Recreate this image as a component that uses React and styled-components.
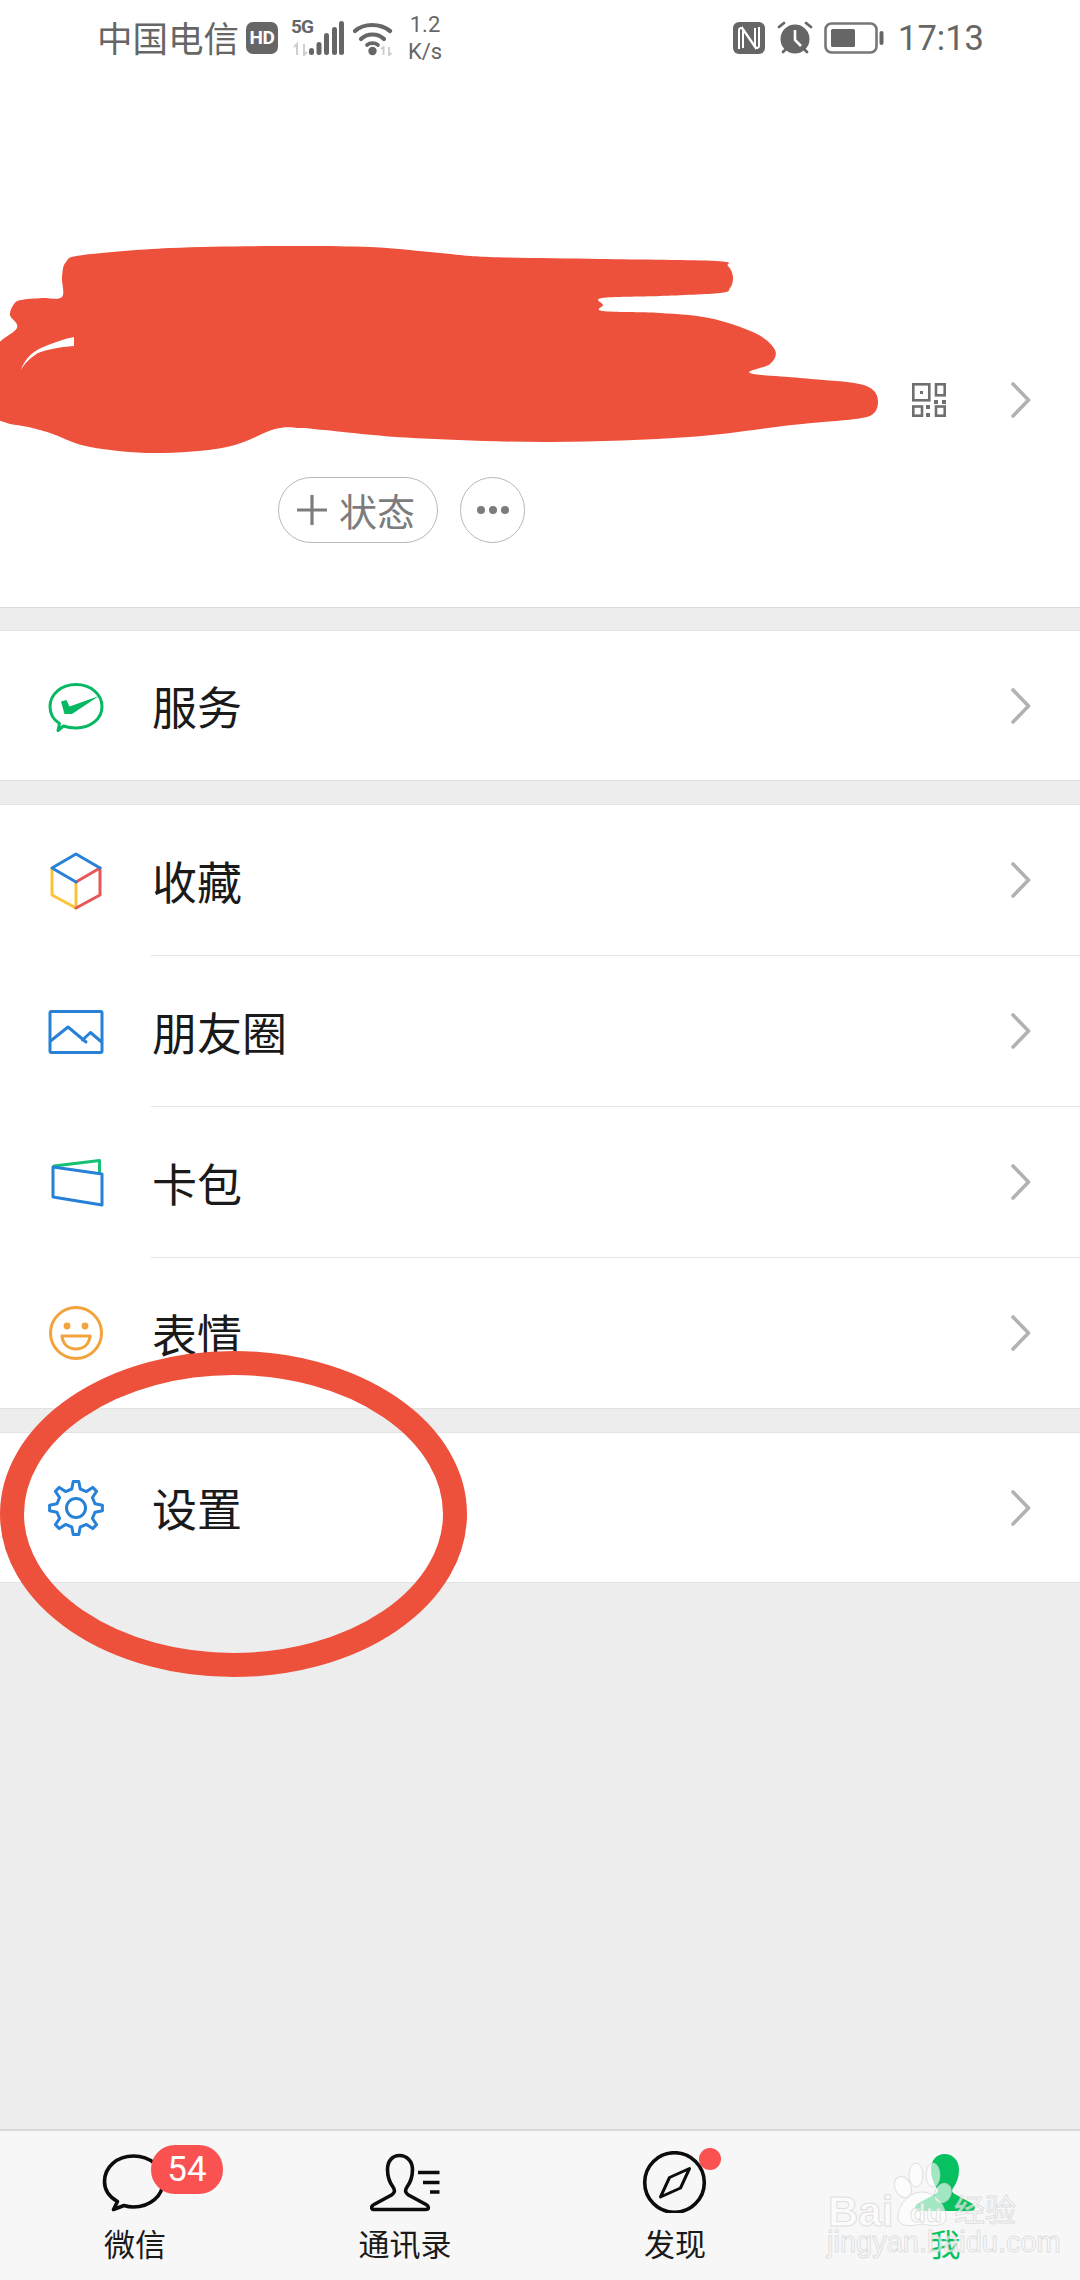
import React from "react";
import styled, { createGlobalStyle } from "styled-components";

const CJK = `"Noto Sans CJK SC", "Roboto", sans-serif`;
const LATIN = `"Roboto", "Noto Sans CJK SC", sans-serif`;

const Global = createGlobalStyle`
  html, body { margin: 0; padding: 0; background: #ededed; }
  * { box-sizing: border-box; }
  svg { display: block; flex: none; }
`;

const Page = styled.div`
  position: relative;
  width: 1080px;
  height: 2280px;
  overflow: hidden;
  display: flex;
  flex-direction: column;
  background: #ededed;
  font-family: ${CJK};
`;

/* ---------- status bar ---------- */
const StatusBar = styled.div`
  flex: none;
  height: 76px;
  padding: 0 96px 0 97px;
  display: flex;
  align-items: center;
  justify-content: space-between;
  color: #666;
`;
const StatusGroup = styled.div`
  display: flex;
  align-items: center;
`;
const Carrier = styled.span`
  width: 149px;
  margin-top: -3px;
  font-size: 35.5px;
  line-height: 40px;
  white-space: nowrap;
`;
const HdBadge = styled.div`
  width: 32px;
  height: 32px;
  border-radius: 7px;
  background: #666;
  color: #fff;
  font-family: ${LATIN};
  font-weight: 700;
  font-size: 19px;
  line-height: 32px;
  letter-spacing: -0.5px;
  text-align: center;
`;
const SignalCluster = styled.div`
  position: relative;
  width: 53px;
  height: 36px;
  margin-left: 13px;
`;
const FiveG = styled.span`
  position: absolute;
  left: 0;
  top: -3px;
  font-family: ${LATIN};
  font-weight: 700;
  font-size: 19px;
  line-height: 20px;
  letter-spacing: -1px;
  color: #666;
`;
const WifiIcon = styled.svg`
  margin-left: 9px;
`;
const Speed = styled.div`
  width: 36px;
  margin-left: 13px;
  margin-top: -1px;
  font-family: ${LATIN};
  font-size: 22px;
  line-height: 27px;
  text-align: center;
  white-space: nowrap;
`;
const AlarmIcon = styled.svg`
  margin-left: 12px;
`;
const BatteryIcon = styled.svg`
  margin-left: 11px;
`;
const Clock = styled.span`
  margin-left: 14px;
  font-family: ${LATIN};
  font-size: 34.5px;
  line-height: 40px;
`;

/* ---------- profile header ---------- */
const Header = styled.div`
  flex: none;
  background: #fff;
  height: 608px;
  border-bottom: 1px solid #dcdcdc;
  display: flex;
  flex-direction: column;
`;
const ProfileRow = styled.div`
  flex: none;
  height: 48px;
  margin-top: 300px;
  padding-right: 49px;
  display: flex;
  align-items: center;
  justify-content: flex-end;
  gap: 65px;
`;
const StatusActions = styled.div`
  flex: none;
  margin-top: 53px;
  margin-left: 278px;
  display: flex;
  gap: 22px;
`;
const Pill = styled.div`
  height: 66px;
  width: ${(p) => p.$w}px;
  border: 1px solid #b8b8b8;
  border-radius: 33px;
  display: flex;
  align-items: center;
  justify-content: ${(p) => (p.$start ? "flex-start" : "center")};
  padding-left: ${(p) => (p.$start ? 17 : 0)}px;
  gap: 11px;
  color: #7c7c7c;
  font-size: 38px;
  line-height: 40px;
`;

/* ---------- list ---------- */
const Section = styled.div`
  flex: none;
  margin-top: ${(p) => p.$mt}px;
  background: #fff;
  border-top: 1px solid #e2e2e2;
  border-bottom: 1px solid #e2e2e2;
`;
const Row = styled.div`
  position: relative;
  height: ${(p) => p.$h || 150}px;
  padding: 0 49px 0 46px;
  display: flex;
  align-items: center;
`;
const Divider = styled.div`
  height: 1px;
  margin-left: 151px;
  background: #e3e3e3;
`;
const RowLabel = styled.span`
  flex: 1;
  margin-left: 46px;
  padding-top: 1px;
  font-size: 45px;
  line-height: 60px;
  color: #1a1a1a;
`;
const Spacer = styled.div`
  flex: 1;
`;

/* ---------- tab bar ---------- */
const TabBar = styled.div`
  flex: none;
  height: 151px;
  background: #f7f7f7;
  border-top: 2px solid #d8d8d8;
  display: grid;
  grid-template-columns: repeat(4, 270px);
`;
const Tab = styled.div`
  position: relative;
  display: flex;
  flex-direction: column;
  align-items: center;
  padding-top: 20px;
`;
const TabLabel = styled.span`
  margin-top: 9px;
  font-size: 31px;
  line-height: 42px;
  color: ${(p) => (p.$active ? "#07c160" : "#1a1a1a")};
`;
const Badge = styled.div`
  position: absolute;
  left: 151px;
  top: 14px;
  width: 72px;
  height: 49px;
  border-radius: 24px;
  background: #fa5151;
  color: #fff;
  font-family: ${LATIN};
  font-size: 35px;
  line-height: 49px;
  text-align: center;
`;
const Dot = styled.div`
  position: absolute;
  left: 159px;
  top: 17px;
  width: 22px;
  height: 22px;
  border-radius: 50%;
  background: #fa5151;
`;

/* ---------- overlays ---------- */
const Annotations = styled.svg`
  position: absolute;
  left: 0;
  top: 0;
  pointer-events: none;
`;
const Watermark = styled.div`
  position: absolute;
  left: 826px;
  top: 2160px;
  width: 200px;
  height: 100px;
  pointer-events: none;
`;
const PawMark = styled.svg`
  position: absolute;
  left: 0;
  top: 0;
`;
const WmText = styled.span`
  position: absolute;
  left: ${(p) => p.$x}px;
  top: ${(p) => p.$y}px;
  font-family: ${(p) => (p.$cjk ? CJK : `"Liberation Sans", sans-serif`)};
  font-weight: ${(p) => p.$weight || 400};
  font-size: ${(p) => p.$size}px;
  line-height: 1;
  white-space: nowrap;
  color: rgba(255, 255, 255, 0.62);
  -webkit-text-stroke: 1px rgba(205, 205, 205, 0.6);
`;

/* ---------- drawings ---------- */
const Chevron = () => (
  <svg width="20" height="36" viewBox="0 0 20 36">
    <polyline points="2,2 17.5,18 2,34" fill="none" stroke="#b2b2b2" strokeWidth="3.6" strokeLinecap="round" strokeLinejoin="round" />
  </svg>
);

const BLUE = "#2782d7";
const ic = { fill: "none", strokeWidth: 3, strokeLinejoin: "round", strokeLinecap: "round" };

const ServiceIcon = () => (
  <svg width="60" height="60" viewBox="46 675 60 60">
    <path d="M58 729.5 L59.5 722.5 C53 718.5 50 712.5 50 705.5 C50 693 61.5 683.5 76 683.5 C90.5 683.5 102 693 102 705.5 C102 718 90.5 727 76 727 C71.5 727 67.5 726.5 63.5 725 Z" {...ic} stroke="#07b863" />
    <path d="M61 700.5 L66.5 699 L69.5 705.5 L99 695 L72 713 L64.5 713 Z" fill="#07b863" />
  </svg>
);
const CubeIcon = () => (
  <svg width="60" height="60" viewBox="46 850 60 60">
    <g {...ic}>
      <path d="M52 868 V895 L76 908 V882" stroke="#f9c33c" />
      <path d="M100 868 V895 L76 908 M100 868 L76 882" stroke="#e8565a" />
      <path d="M100 868 L76 854 L52 868 L76 882" stroke={BLUE} />
    </g>
  </svg>
);
const MomentsIcon = () => (
  <svg width="60" height="60" viewBox="46 1001 60 60">
    <g {...ic} stroke={BLUE}>
      <rect x="50" y="1011.5" width="52" height="41" rx="1.5" />
      <path d="M50.5 1041 L68 1027 L86 1042 M82.5 1040 L90.5 1032.5 L101 1041.5" />
    </g>
  </svg>
);
const WalletIcon = () => (
  <svg width="60" height="60" viewBox="46 1153 60 60">
    <g {...ic}>
      <path d="M54 1167 L99.5 1161.5 V1173" stroke="#16c172" />
      <path d="M53 1168 L102 1175 V1206 L53 1198 Z" stroke={BLUE} />
    </g>
  </svg>
);
const SmileIcon = () => (
  <svg width="60" height="60" viewBox="46 1303 60 60">
    <circle cx="76" cy="1333" r="25.5" fill="none" stroke="#f2a33c" strokeWidth="3" />
    <circle cx="67" cy="1326" r="3.4" fill="#f2a33c" />
    <circle cx="85" cy="1326" r="3.4" fill="#f2a33c" />
    <path d="M62 1336 H90 C89 1345 83 1349 76 1349 C69 1349 63 1345 62 1336 Z" fill="none" stroke="#f2a33c" strokeWidth="3" strokeLinejoin="round" />
  </svg>
);

const gearPath = (() => {
  const cx = 76, cy = 1507, n = 8, R = 26.5, r = 19.5;
  const pts = [];
  for (let i = 0; i < n; i++) {
    const a = (i * 2 * Math.PI) / n - Math.PI / 2;
    const s = Math.PI / n;
    [[-0.55, r], [-0.27, R], [0.27, R], [0.55, r]].forEach(([k, rad]) => {
      const t = a + k * s;
      pts.push(`${(cx + rad * Math.cos(t)).toFixed(1)} ${(cy + rad * Math.sin(t)).toFixed(1)}`);
    });
  }
  return "M" + pts.join(" L") + " Z";
})();
const GearIcon = () => (
  <svg width="60" height="60" viewBox="46 1477 60 60">
    <path d={gearPath} {...ic} stroke={BLUE} />
    <circle cx="76" cy="1507" r="9.5" fill="none" stroke={BLUE} strokeWidth="3" />
  </svg>
);

const QrIcon = () => (
  <svg width="34" height="34" viewBox="0 0 34 34" fill="none" stroke="#6f6f6f" strokeWidth="2.6">
    <rect x="1.3" y="1.3" width="16" height="16" />
    <rect x="8" y="8" width="3" height="3" fill="#6f6f6f" stroke="none" />
    <rect x="24" y="1.3" width="8.7" height="11" />
    <rect x="1.3" y="23.5" width="8.7" height="9.2" />
    <rect x="24" y="23.5" width="8.7" height="9.2" />
    <g fill="#6f6f6f" stroke="none">
      <rect x="22" y="17" width="4" height="4" /><rect x="30" y="17" width="4" height="4" />
      <rect x="14" y="22" width="4" height="4" /><rect x="14" y="30" width="4" height="4" />
    </g>
  </svg>
);

const PERSON = "M399.5 2155.5 C392 2155.5 387.5 2161.5 387.5 2169.5 C387.5 2177 390 2183 393 2187 C395.5 2190.5 394.5 2193 391.5 2195 L374 2204.5 C370.5 2206.5 371 2209.5 374.5 2209.5 H425.5 C429 2209.5 429.5 2206.5 426 2204.5 L408.5 2195 C405.5 2193 404.5 2190.5 407 2187 C410 2183 412.5 2177 412.5 2169.5 C412.5 2161.5 407 2155.5 399.5 2155.5 Z";

const ChatTab = () => (
  <svg width="70" height="62" viewBox="100 2151 70 62">
    <path d="M113.5 2209.5 L117.5 2201.5 C108.5 2196.5 104.5 2189.5 104.5 2181.5 C104.5 2167 117 2156 133.5 2156 C150 2156 163 2167 163 2181.5 C163 2196 150 2207 133.5 2207 C130 2207 127 2206.5 124 2205.5 Z" fill="none" stroke="#0c0c0c" strokeWidth="3.6" strokeLinejoin="round" />
  </svg>
);
const ContactsTab = () => (
  <svg width="70" height="62" viewBox="370 2151 70 62">
    <path d={PERSON} fill="none" stroke="#0c0c0c" strokeWidth="3.6" />
    <path d="M418 2172.5 H439.5 M423 2182.5 H439.5 M430 2192 H439.5" stroke="#0c0c0c" strokeWidth="3.6" />
  </svg>
);
const DiscoverTab = () => (
  <svg width="70" height="62" viewBox="640 2151 70 62">
    <circle cx="674.5" cy="2182.5" r="29.8" fill="none" stroke="#0c0c0c" strokeWidth="3.6" />
    <path d="M689.5 2168.5 L680.5 2188 L660.5 2197 L669.5 2177.5 Z" fill="none" stroke="#0c0c0c" strokeWidth="3" strokeLinejoin="round" />
  </svg>
);
const MeTab = () => (
  <svg width="70" height="62" viewBox="910 2151 70 62">
    <path d={PERSON} transform="translate(545 0)" fill="#07c160" stroke="#07c160" strokeWidth="3" />
  </svg>
);

/* ---------- annotation strokes ---------- */
const smooth = (pts) => {
  const n = pts.length;
  let d = `M${pts[0][0]} ${pts[0][1]}`;
  for (let i = 0; i < n; i++) {
    const p0 = pts[(i - 1 + n) % n], p1 = pts[i], p2 = pts[(i + 1) % n], p3 = pts[(i + 2) % n];
    const c1 = [p1[0] + (p2[0] - p0[0]) / 6, p1[1] + (p2[1] - p0[1]) / 6];
    const c2 = [p2[0] - (p3[0] - p1[0]) / 6, p2[1] - (p3[1] - p1[1]) / 6];
    d += ` C${c1[0].toFixed(1)} ${c1[1].toFixed(1)} ${c2[0].toFixed(1)} ${c2[1].toFixed(1)} ${p2[0]} ${p2[1]}`;
  }
  return d + " Z";
};
const SCRIBBLE = smooth([
  [62, 277], [66, 262], [83, 255], [170, 248], [275, 246], [370, 247], [440, 253], [489, 257], [600, 259], [716, 261],
  [728, 266], [733, 277], [730, 288], [720, 293], [660, 296], [602, 298], [603, 305], [603, 311], [660, 313], [709, 318],
  [755, 333], [775, 350], [770, 364], [750, 373], [800, 378], [854, 383], [873, 390], [878, 402], [873, 414], [855, 419],
  [792, 425], [689, 437], [551, 442], [413, 438], [324, 430], [300, 428], [275, 429], [227, 447], [155, 453], [90, 447],
  [50, 433], [28, 427], [7, 423], [-4, 415], [-6, 380], [-4, 347], [17, 328], [10, 315], [14, 304], [21, 300], [42, 298], [62, 297],
]);
const RED = "#ee513b";

export default function App() {
  return (
    <Page>
      <Global />
      <Header>
        <StatusBar>
          <StatusGroup>
            <Carrier>中国电信</Carrier>
            <HdBadge>HD</HdBadge>
            <SignalCluster>
              <FiveG>5G</FiveG>
              <svg width="53" height="36" viewBox="0 0 53 36">
                <path d="M3 27 L6 24 V35 M13 24 V35 L16 32" fill="none" stroke="#cfcfcf" strokeWidth="2" />
                <g fill="#666">
                  <rect x="18" y="28" width="5" height="7" rx="2.5" />
                  <rect x="25.5" y="22" width="5" height="13" rx="2.5" />
                  <rect x="33" y="13" width="5" height="22" rx="2.5" />
                  <rect x="41" y="7" width="5" height="28" rx="2.5" />
                  <rect x="48" y="1" width="5" height="34" rx="2.5" />
                </g>
              </svg>
            </SignalCluster>
            <WifiIcon width="41" height="36" viewBox="0 0 41 36">
              <path d="M2 11 C11 3 27 3 37 11" fill="none" stroke="#666" strokeWidth="4.2" strokeLinecap="round" />
              <path d="M8 19 C14 13 25 13 31 19" fill="none" stroke="#666" strokeWidth="4.2" strokeLinecap="round" />
              <circle cx="19.5" cy="31" r="4.2" fill="#666" />
              <path d="M14 25 C17 22.5 22 22.5 25 25" fill="none" stroke="#666" strokeWidth="3.6" strokeLinecap="round" />
              <path d="M28 29 L30.5 27 V35 M36 27 V35 L38.5 33" fill="none" stroke="#cfcfcf" strokeWidth="2" />
            </WifiIcon>
            <Speed>1.2<br />K/s</Speed>
          </StatusGroup>
          <StatusGroup>
            <svg width="32" height="32" viewBox="0 0 32 32">
              <rect width="32" height="32" rx="6" fill="#666" />
              <path d="M6 27 V8 C6 6 8 5.5 9.5 7 L22 25 V6 M26 5 V24 C26 26 24 26.5 22.5 25 L10 7 V26" fill="none" stroke="#fff" strokeWidth="2" />
            </svg>
            <AlarmIcon width="36" height="34" viewBox="0 0 36 34">
              <circle cx="18" cy="18" r="14.5" fill="#666" />
              <path d="M18 9 V19 L24 25" fill="none" stroke="#fff" strokeWidth="2.6" />
              <path d="M2 6 L7 2 M34 6 L29 2 M6 31 L9 28 M30 31 L27 28" stroke="#666" strokeWidth="2.8" strokeLinecap="round" />
            </AlarmIcon>
            <BatteryIcon width="60" height="32" viewBox="0 0 60 32">
              <rect x="1.5" y="1.5" width="51" height="29" rx="6" fill="none" stroke="#777" strokeWidth="2.6" />
              <rect x="7" y="7" width="24" height="18" rx="1.5" fill="#666" />
              <rect x="55.5" y="9" width="4" height="14" rx="2" fill="#666" />
            </BatteryIcon>
            <Clock>17:13</Clock>
          </StatusGroup>
        </StatusBar>
        <ProfileRow>
          <QrIcon />
          <Chevron />
        </ProfileRow>
        <StatusActions>
          <Pill $w={160} $start>
            <svg width="32" height="32" viewBox="0 0 32 32">
              <path d="M16 1 V31 M1 16 H31" stroke="#7c7c7c" strokeWidth="3.2" />
            </svg>
            <span>状态</span>
          </Pill>
          <Pill $w={65}>
            <svg width="34" height="10" viewBox="0 0 34 10">
              <circle cx="5" cy="5" r="4" fill="#7c7c7c" />
              <circle cx="17" cy="5" r="4" fill="#7c7c7c" />
              <circle cx="29" cy="5" r="4" fill="#7c7c7c" />
            </svg>
          </Pill>
        </StatusActions>
      </Header>

      <Section $mt={22}>
        <Row $h={149}>
          <ServiceIcon />
          <RowLabel>服务</RowLabel>
          <Chevron />
        </Row>
      </Section>

      <Section $mt={23}>
        <Row>
          <CubeIcon />
          <RowLabel>收藏</RowLabel>
          <Chevron />
        </Row>
        <Divider />
        <Row>
          <MomentsIcon />
          <RowLabel>朋友圈</RowLabel>
          <Chevron />
        </Row>
        <Divider />
        <Row>
          <WalletIcon />
          <RowLabel>卡包</RowLabel>
          <Chevron />
        </Row>
        <Divider />
        <Row>
          <SmileIcon />
          <RowLabel>表情</RowLabel>
          <Chevron />
        </Row>
      </Section>

      <Section $mt={23}>
        <Row $h={149}>
          <GearIcon />
          <RowLabel>设置</RowLabel>
          <Chevron />
        </Row>
      </Section>

      <Spacer />

      <TabBar>
        <Tab>
          <ChatTab />
          <Badge>54</Badge>
          <TabLabel>微信</TabLabel>
        </Tab>
        <Tab>
          <ContactsTab />
          <TabLabel>通讯录</TabLabel>
        </Tab>
        <Tab>
          <DiscoverTab />
          <Dot />
          <TabLabel>发现</TabLabel>
        </Tab>
        <Tab>
          <MeTab />
          <TabLabel $active>我</TabLabel>
        </Tab>
      </TabBar>

      <Annotations width="1080" height="2280" viewBox="0 0 1080 2280">
        <path d={SCRIBBLE} fill={RED} />
        <path d="M74 337 L74 346 C60 347 45 350 38 353 C30 358 24 364 21 370 C24 360 32 352 41 348 C52 343 64 339 74 337 Z" fill="#fff" />
        <ellipse cx="233.5" cy="1514" rx="221.5" ry="151" fill="none" stroke={RED} strokeWidth="24" />
      </Annotations>

      <Watermark>
        <PawMark width="200" height="100" viewBox="826 2160 200 100">
          <g fill="rgba(255,255,255,0.62)" stroke="rgba(205,205,205,0.6)" strokeWidth="1">
            <ellipse cx="903" cy="2187" rx="8" ry="11" transform="rotate(-25 903 2187)" />
            <ellipse cx="916" cy="2175" rx="7" ry="12" />
            <ellipse cx="933" cy="2175" rx="7" ry="12" />
            <ellipse cx="943" cy="2193" rx="8" ry="10" transform="rotate(25 943 2193)" />
            <path d="M922 2192 C936 2192 946 2206 946 2217 C946 2226 936 2227 922 2224 C908 2227 898 2226 898 2217 C898 2206 908 2192 922 2192 Z" />
          </g>
        </PawMark>
        <WmText $x={2} $y={31} $size={42} $weight={700}>Bai</WmText>
        <WmText $x={84} $y={40} $size={26} $weight={700}>du</WmText>
        <WmText $x={128} $y={32} $size={31} $cjk>经验</WmText>
        <WmText $x={1} $y={68} $size={29}>jingyan.baidu.com</WmText>
      </Watermark>
    </Page>
  );
}
